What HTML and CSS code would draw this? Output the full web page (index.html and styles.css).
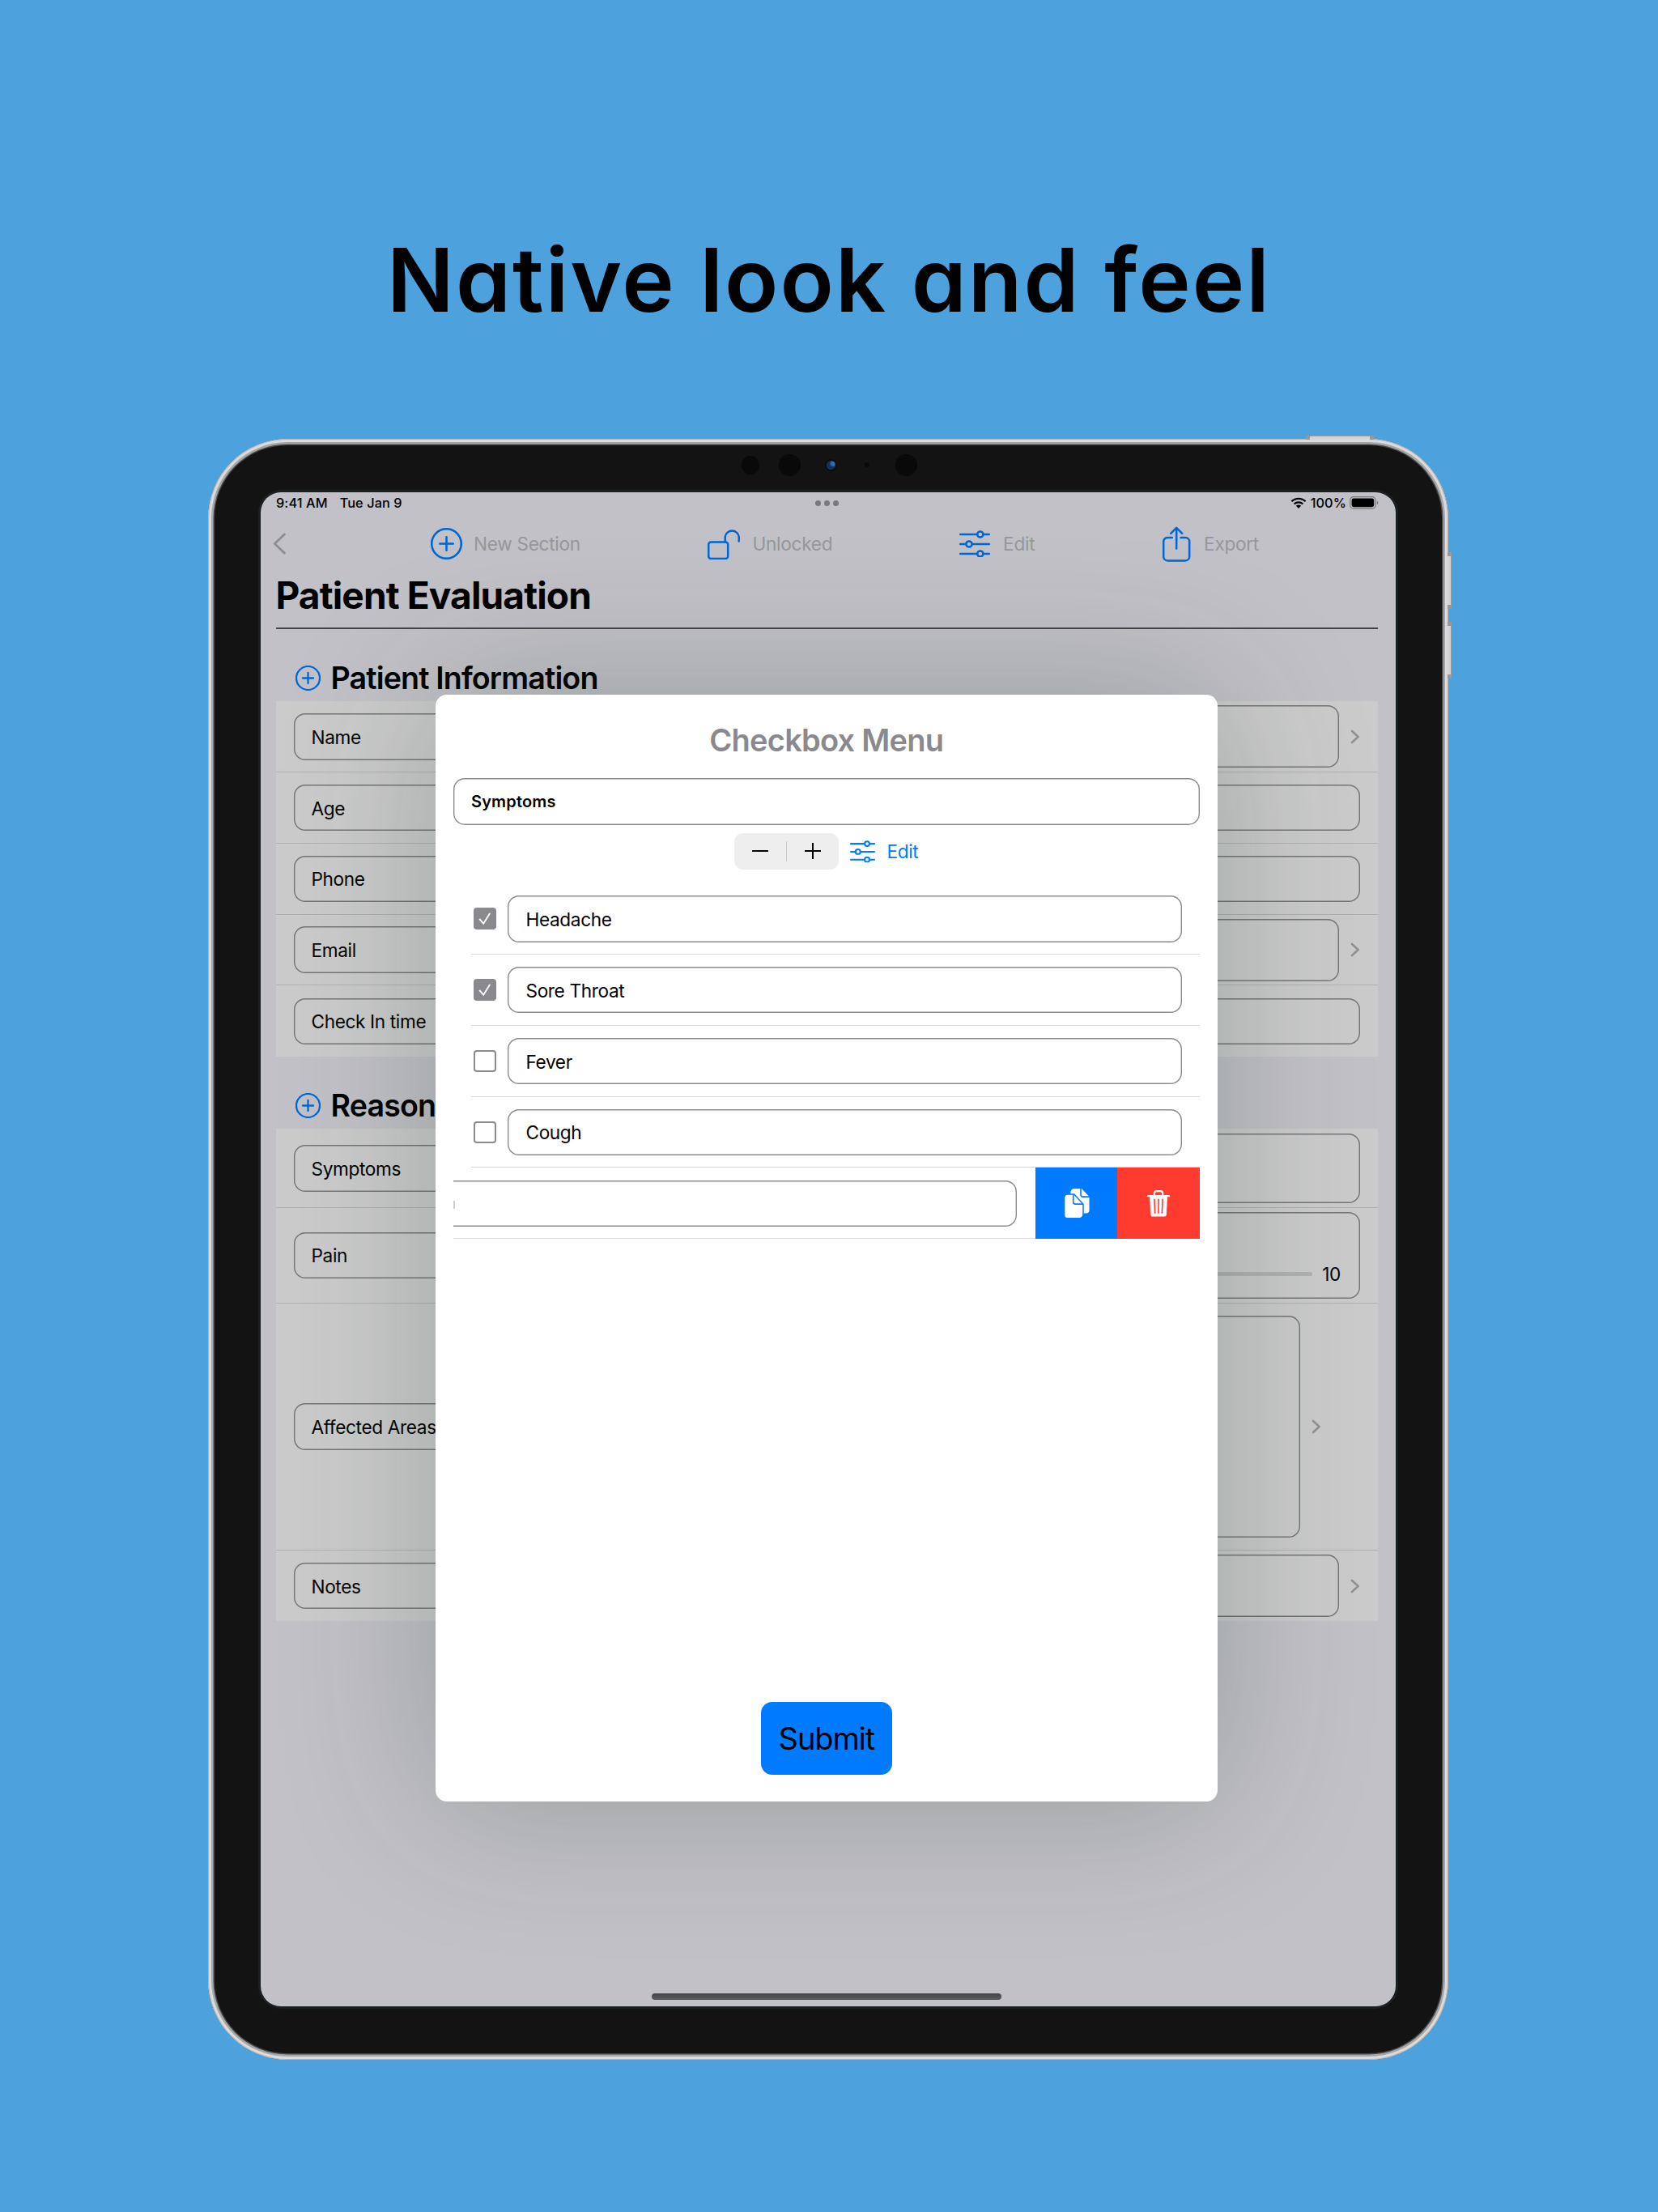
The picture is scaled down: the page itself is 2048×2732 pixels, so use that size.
FILE: index.html
```
<!DOCTYPE html>
<html lang="en">
<head>
<meta charset="utf-8">
<title>Patient Evaluation</title>
<link rel="stylesheet" href="styles.css">
</head>
<body>
<svg class="defs" width="0" height="0" aria-hidden="true">
  <symbol id="plus-circle" viewBox="0 0 38 38">
    <circle cx="19" cy="19" r="17.8"/><path d="M19 11v16M11 19h16"/>
  </symbol>
  <symbol id="sliders" viewBox="0 0 38 33">
    <path d="M1.2 5H22M29.5 5H36.8M1.2 17H8.2M15.8 17H36.8M1.2 29H22M29.5 29H36.8"/>
    <circle cx="25.8" cy="5" r="3.6"/><circle cx="12" cy="17" r="3.6"/><circle cx="25.8" cy="29" r="3.6"/>
  </symbol>
  <symbol id="chevron" viewBox="0 0 12 18">
    <path d="M2 2l7.6 7L2 16"/>
  </symbol>
</svg>

<h1 class="headline">Native look and feel</h1>

<div class="device">
  <span class="hw hw-power"></span>
  <span class="hw hw-up"></span>
  <span class="hw hw-down"></span>

  <div class="bezel">
    <span class="sensor s22"></span>
    <span class="sensor s27"></span>
    <span class="lens"></span>
    <span class="sensor s6"></span>
    <span class="sensor s27 last"></span>
  </div>

  <div class="screen">
    <div class="status">
      <span>9:41 AM</span>
      <span class="date">Tue Jan 9</span>
      <span class="dots"><i></i><i></i><i></i></span>
      <svg class="wifi" viewBox="0 0 20 14" width="20" height="14">
        <path d="M1.4 5.3a12.3 12.3 0 0 1 17.2 0M4.6 8.5a7.8 7.8 0 0 1 10.8 0" fill="none" stroke="#000" stroke-width="2.3"/>
        <path d="M6.9 10.8a4.4 4.4 0 0 1 6.2 0L10 13.9z"/>
      </svg>
      <span class="percent">100%</span>
      <svg class="battery" viewBox="0 0 37 16" width="37" height="16">
        <rect x=".7" y=".7" width="31.4" height="14.4" rx="4" fill="none" stroke="#77777b" stroke-width="1.2"/>
        <rect x="2.6" y="2.6" width="27.6" height="10.6" rx="2.4"/>
        <path d="M33.8 5.4a2.8 2.8 0 0 1 0 5z" fill="#77777b"/>
      </svg>
    </div>

    <nav class="toolbar">
      <svg class="back" viewBox="0 0 17 27" width="17" height="27"><path d="M14.3 2L2.3 13.5l12 11.5"/></svg>
      <div class="tool"><svg class="icon" width="39" height="39"><use href="#plus-circle"/></svg><span>New Section</span></div>
      <div class="tool lock"><svg class="icon" viewBox="0 0 40 38" width="40" height="38"><rect x="1.2" y="16.4" width="24" height="20.6" rx="3"/><path d="M21.7 16.4V9.8a8.6 8.6 0 0 1 17 0v5.6"/></svg><span>Unlocked</span></div>
      <div class="tool edit"><svg class="icon" width="38" height="33"><use href="#sliders"/></svg><span>Edit</span></div>
      <div class="tool export"><svg class="icon" viewBox="0 0 35 44" width="35" height="44"><path d="M11.8 14H6.2a5 5 0 0 0-5 5v18.400a5 5 0 0 0 5 5h22a5 5 0 0 0 5-5V19a5 5 0 0 0-5-5h-5.600M17.200 27.500V2M10.200 8.800l7-7 7 7"/></svg><span>Export</span></div>
    </nav>

    <h2 class="title">Patient Evaluation</h2>

    <section>
      <h3 class="section-head"><svg class="icon" width="31" height="31"><use href="#plus-circle"/></svg><span>Patient Information</span></h3>
      <div class="group">
        <div class="row"><div class="field label">Name</div><div class="field value tall"></div><svg class="chev" width="12" height="18"><use href="#chevron"/></svg></div>
        <div class="row"><div class="field label">Age</div><div class="field value"></div></div>
        <div class="row"><div class="field label">Phone</div><div class="field value"></div></div>
        <div class="row"><div class="field label">Email</div><div class="field value tall"></div><svg class="chev" width="12" height="18"><use href="#chevron"/></svg></div>
        <div class="row"><div class="field label">Check In time</div><div class="field value"></div></div>
      </div>
    </section>

    <section>
      <h3 class="section-head"><svg class="icon" width="31" height="31"><use href="#plus-circle"/></svg><span>Reason</span></h3>
      <div class="group">
        <div class="row symptoms"><div class="field label">Symptoms</div><div class="field value"></div></div>
        <div class="row pain"><div class="field label">Pain</div><div class="field value"><span class="track"></span><span>10</span></div></div>
        <div class="row areas"><div class="field label">Affected Areas</div><div class="field value"></div><svg class="chev" width="12" height="18"><use href="#chevron"/></svg></div>
        <div class="row"><div class="field label">Notes</div><div class="field value tall"></div><svg class="chev" width="12" height="18"><use href="#chevron"/></svg></div>
      </div>
    </section>

    <span class="home-bar"></span>

    <div class="modal">
      <h2 class="modal-title">Checkbox Menu</h2>
      <div class="field name">Symptoms</div>
      <div class="controls">
        <div class="stepper">
          <svg viewBox="0 0 20 20" width="20" height="20"><path d="M.7 10h18.600"/></svg>
          <i></i>
          <svg viewBox="0 0 20 20" width="20" height="20"><path d="M.7 10h18.600M10 .5v19"/></svg>
        </div>
        <svg class="icon" width="31" height="27"><use href="#sliders"/></svg>
        <span>Edit</span>
      </div>
      <div class="options">
        <div class="option"><span class="check on"><svg viewBox="0 0 28 28"><path d="M7.800 14.800l4.700 5.400L20.300 7.800"/></svg></span><div class="field">Headache</div></div>
        <div class="option"><span class="check on"><svg viewBox="0 0 28 28"><path d="M7.800 14.800l4.700 5.400L20.300 7.800"/></svg></span><div class="field">Sore Throat</div></div>
        <div class="option"><span class="check"></span><div class="field">Fever</div></div>
        <div class="option"><span class="check"></span><div class="field">Cough</div></div>
        <div class="option swiped">
          <div class="slid"><i></i><div class="field"></div></div>
          <div class="action copy">
            <svg viewBox="0 0 32 38" width="32" height="38">
              <path d="M8.500 5.500A4.500 4.500 0 0 1 13 1h9l9.500 10v16.500a4 4 0 0 1-4 4H22L8.500 16z" fill="#fff"/>
              <path d="M21 0v8.500a2.600 2.600 0 0 0 2.600 2.600H32" fill="none" stroke="#007aff" stroke-width="1.600"/>
              <path d="M4.800 8h8l11.200 12.200V33a4.800 4.800 0 0 1-4.800 4.800H4.800A4.300 4.300 0 0 1 .500 33.500V12.300A4.300 4.300 0 0 1 4.800 8z" fill="#fff" stroke="#007aff" stroke-width="1.500"/>
              <path d="M11.700 8v9.500a2.600 2.600 0 0 0 2.600 2.600h9.500" fill="none" stroke="#007aff" stroke-width="1.600"/>
            </svg>
          </div>
          <div class="action trash">
            <svg viewBox="0 0 28 33" width="28" height="33">
              <path d="M8.800 6.500V4A2.800 2.800 0 0 1 11.600 1.200h4.800A2.800 2.800 0 0 1 19.200 4v2.500" fill="none" stroke="#fff" stroke-width="2.200"/>
              <path d="M1 7.200h26" stroke="#fff" stroke-width="2.200" stroke-linecap="round"/>
              <path d="M3 7h22l-1.200 23a2.800 2.800 0 0 1-2.800 2.600H7A2.800 2.800 0 0 1 4.200 30z" fill="#fff"/>
              <path d="M9 11.200l.6 17M14 11.200v17M19 11.200l-.6 17" stroke="#ff3b30" stroke-width="1.600" stroke-linecap="round"/>
            </svg>
          </div>
        </div>
      </div>
      <div class="submit">Submit</div>
    </div>
  </div>
</div>
</body>
</html>
```
FILE: styles.css
```
* { box-sizing: border-box; }

body {
  margin: 0;
  width: 2048px;
  height: 2732px;
  overflow: hidden;
  background: #4da2de;
  color: #000;
  font-family: Inter, "Liberation Sans", sans-serif;
  font-size: 22.6px;
  letter-spacing: -0.35px;
}

h1, h2, h3 { margin: 0; }
.defs { display: block; height: 0; }
svg { flex: none; }

.headline {
  height: 542px;
  padding-top: 280px;
  text-align: center;
  font-size: 109px;
  line-height: 130px;
  font-weight: 580;
  letter-spacing: 2.100px;
  font-feature-settings: "cv11";
}

/* Tablet hardware */
.device {
  position: relative;
  width: 1532px;
  height: 2002px;
  margin-left: 257px;
  padding: 8px 65px 0;
  border-radius: 98px;
  background: #131313;
  box-shadow: inset 0 0 0 1px #b1b3b6, inset 0 0 0 4px #dbdbdd, inset 0 0 0 6.500px #a6a6a9, inset 0 0 0 8px #4b4b4c;
}
.hw { position: absolute; background: #d5d5d7; border: 1px solid #97989b; }
.hw-power { left: 1356px; top: -4px; width: 84px; height: 5px; border-width: 1px 5px 0; }
.hw-up, .hw-down { left: 1531px; width: 5px; height: 70px; border-width: 5px 1px 5px 0; }
.hw-up { top: 140px; }
.hw-down { top: 226px; }

.bezel {
  display: flex;
  align-items: center;
  height: 58px;
  padding: 0 0 10px 593.500px;
}
.sensor { border-radius: 50%; background: #090909; }
.s22 { width: 22px; height: 23px; margin-right: 24px; }
.s27 { width: 27px; height: 27px; margin-right: 32.500px; }
.s6 { width: 6px; height: 6px; margin-right: 32px; }
.last { margin-right: 0; }
.lens {
  width: 11px;
  height: 11px;
  margin-right: 36px;
  border-radius: 50%;
  background: radial-gradient(circle at 72% 32%, #2d70b8 0 18%, #15294d 45%, #173c6c 80%);
  box-shadow: 0 0 0 2px #0b0c0e;
}

/* Screen */
.screen {
  position: relative;
  display: flex;
  flex-direction: column;
  width: 1402px;
  height: 1870px;
  padding: 0 22.500px 0 19px;
  border-radius: 25px;
  background: #c2c1c7;
  box-shadow: 0 0 0 3px #1a1f21;
  overflow: hidden;
}

.status {
  display: flex;
  align-items: center;
  height: 26px;
  font-size: 16.300px;
  font-weight: 500;
  letter-spacing: 0.100px;
}
.date { margin-left: 15px; }
.dots { display: flex; gap: 4px; margin-left: 510px; }
.dots i { width: 7px; height: 7px; border-radius: 50%; background: #79787d; }
.wifi { margin-left: auto; }
.percent { margin: 0 4px 0 5px; }
.battery { margin-right: -2.500px; }

.toolbar {
  display: grid;
  grid-template-columns: 195px 342px 310.600px 251px 1fr;
  align-items: center;
  height: 75.400px;
  margin: 0 -20px 0 -4px;
  color: #97979a;
  letter-spacing: -0.280px;
}
.back { fill: none; stroke: #8e8e92; stroke-width: 3; stroke-linecap: round; stroke-linejoin: round; }
.tool { display: flex; align-items: center; gap: 14px; }
.lock { gap: 15.500px; }
.edit, .export { gap: 16.500px; }
.icon { fill: none; stroke: #0066d6; stroke-width: 2.500; stroke-linecap: round; stroke-linejoin: round; }

.title {
  height: 67.600px;
  border-bottom: 2px solid #434446;
  font-size: 46px;
  line-height: 52px;
  font-weight: 700;
  letter-spacing: -0.850px;
  text-indent: -0.500px;
}

.section-head {
  display: flex;
  align-items: center;
  gap: 12.500px;
  height: 89.400px;
  padding: 31px 0 0 24px;
  font-size: 37.600px;
  font-weight: 600;
  letter-spacing: -0.850px;
}
.section-head .icon { stroke-width: 2.800; }

.field {
  display: flex;
  align-items: center;
  height: 57.600px;
  padding: 1px 22px 0;
  border-radius: 14px;
  box-shadow: inset 0 0 0 1.400px #8b8b8e;
}

.group { background: #cbcbcb; }
.row {
  display: flex;
  align-items: center;
  height: 87.740px;
  padding: 0.400px 22px 0 21.500px;
  border-bottom: 1px solid #afafaf;
}
.row:last-child { border-bottom: 0; }
.row .field { box-shadow: inset 0 0 0 1.400px #757577; }
.label { width: 300px; margin-right: 13px; }
.value { flex: 1; }
.value.tall { height: 77px; }
.chev { margin: 0 0 0 13.800px; fill: none; stroke: #929292; stroke-width: 2.700; stroke-linecap: round; stroke-linejoin: round; }
.symptoms { height: 97.200px; }
.symptoms .value { height: 86px; }
.pain { height: 118px; }
.pain .value { height: 107px; align-items: flex-end; gap: 12px; padding: 0 23.500px 17px; line-height: 27px; }
.track { flex: 1; height: 5.500px; margin-bottom: 10.500px; border-radius: 3px; background: #b1b2b2; }
.areas { height: 305px; padding-right: 70px; }
.areas .value { height: 274px; }

.home-bar {
  width: 432px;
  height: 7.500px;
  margin: auto 0 8.500px 464px;
  border-radius: 4px;
  background: linear-gradient(#434445, #5d5d5f);
}

/* Sheet over the form */
.modal {
  position: absolute;
  left: 216px;
  top: 250.300px;
  display: flex;
  flex-direction: column;
  width: 965.700px;
  height: 1366.700px;
  padding: 10px 22px 33px;
  border-radius: 14px;
  background: #fff;
  box-shadow: 0 0 185px rgba(24, 50, 34, 0.260);
}
.modal-title {
  text-align: center;
  font-size: 38px;
  line-height: 92.700px;
  font-weight: 600;
  letter-spacing: -0.750px;
  color: #8a8a8e;
}
.name { font-size: 20px; font-weight: 600; letter-spacing: 0.160px; }
.controls {
  display: flex;
  align-items: center;
  justify-content: center;
  height: 44.200px;
  margin-top: 10.800px;
  color: #007aff;
}
.controls .icon { margin: 0 14px; stroke: #007aff; stroke-width: 2.500; }
.stepper {
  display: flex;
  align-items: center;
  justify-content: space-between;
  width: 129.200px;
  height: 44.200px;
  padding: 0 22px;
  border-radius: 11px;
  background: #eeeeef;
}
.stepper svg { fill: none; stroke: #000; stroke-width: 2; stroke-linecap: round; }
.stepper i { width: 1px; height: 25px; background: #cfcfd1; }

.options { margin-top: 17.300px; }
.option {
  display: flex;
  align-items: center;
  height: 87.900px;
  margin-left: 22px;
  padding: 0.800px 21.700px 0 3.400px;
  border-bottom: 1px solid #d6d6d8;
}
.option .field { flex: 1; }
.check {
  width: 27.300px;
  height: 27.300px;
  margin-right: 14.800px;
  border: 2px solid #8a8a8e;
  border-radius: 4px;
}
.check.on { border: 0; background: #8a8a8e; }
.check svg { display: block; fill: none; stroke: #fff; stroke-width: 2; stroke-linecap: round; stroke-linejoin: round; }

.swiped { margin-left: 0; padding: 0; border: 0; }
.slid {
  display: flex;
  align-items: center;
  width: 719px;
  height: 100%;
  padding: 1px 22.600px 0 0;
  overflow: hidden;
  border-bottom: 1px solid #e2e2e4;
}
.slid i { width: 2px; height: 10px; margin-top: 4px; background: #cfcfd1; }
.slid .field { margin-left: -30px; }
.action { display: flex; align-items: center; justify-content: center; width: 101.300px; height: 100%; }
.copy { background: #007aff; }
.trash { background: #ff3b30; }

.submit {
  align-self: center;
  width: 162px;
  height: 90px;
  margin-top: auto;
  border-radius: 14px;
  background: #007aff;
  text-align: center;
  font-size: 38px;
  line-height: 90px;
  letter-spacing: -1.100px;
}
```
